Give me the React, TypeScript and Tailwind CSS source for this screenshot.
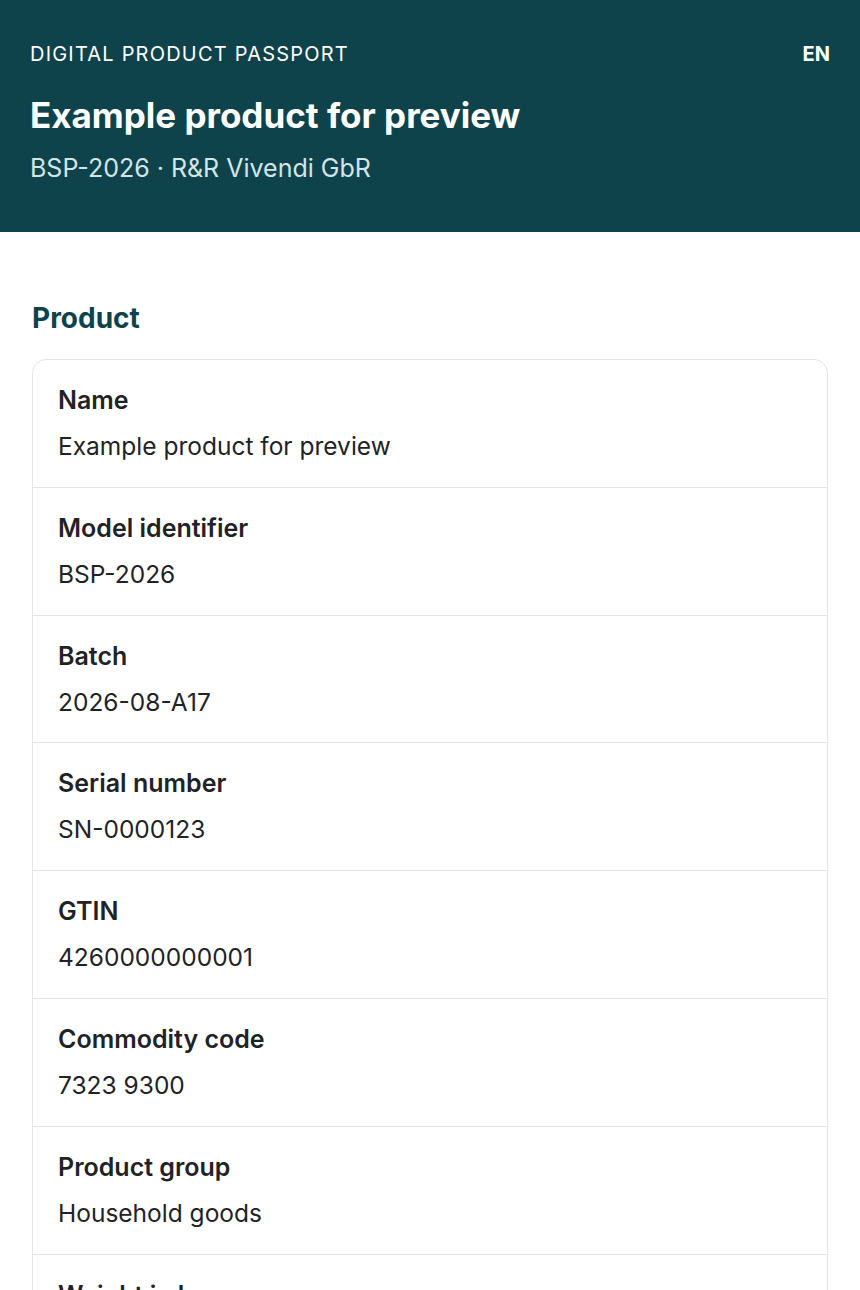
import React from 'react';

type Field = { label: string; value: string };

const productFields: Field[] = [
  { label: 'Name', value: 'Example product for preview' },
  { label: 'Model identifier', value: 'BSP-2026' },
  { label: 'Batch', value: '2026-08-A17' },
  { label: 'Serial number', value: 'SN-0000123' },
  { label: 'GTIN', value: '4260000000001' },
  { label: 'Commodity code', value: '7323 9300' },
  { label: 'Product group', value: 'Household goods' },
  { label: 'Weight in kg', value: '1.2' },
];

export default function App() {
  return (
    <div className="min-h-screen bg-white font-['Inter',sans-serif] text-[#1f2326]">
      <header className="bg-[#0f434c] px-[30px] pt-[39px] pb-[46px] text-white">
        <div className="flex items-center justify-between">
          <span className="text-[20px] leading-[30px] tracking-[0.06em] uppercase">Digital Product Passport</span>
          <span className="text-[20px] leading-[30px] font-bold">EN</span>
        </div>
        <h1 className="mt-[25px] text-[35px] leading-[42px] font-bold">Example product for preview</h1>
        <p className="mt-[14px] text-[25px] leading-[36px] text-[#d3e5e8]">BSP-2026 · R&amp;R Vivendi GbR</p>
      </header>

      <main className="px-8 pt-[68px] pb-10">
        <section>
          <h2 className="text-[28px] leading-[36px] font-bold text-[#0f434c]">Product</h2>
          <div className="mt-[23px] rounded-[14px] border border-[#e3e6e8] overflow-hidden">
            {productFields.map((f, i) => (
              <div
                key={f.label}
                className={`px-[25px] pt-[22px] pb-[22.8px] ${i > 0 ? 'border-t border-[#e3e6e8]' : ''}`}
              >
                <div className="text-[25px] leading-[36px] font-semibold">{f.label}</div>
                <div className="mt-[10px] text-[24.5px] leading-[36px]">{f.value}</div>
              </div>
            ))}
          </div>
        </section>
      </main>
    </div>
  );
}
